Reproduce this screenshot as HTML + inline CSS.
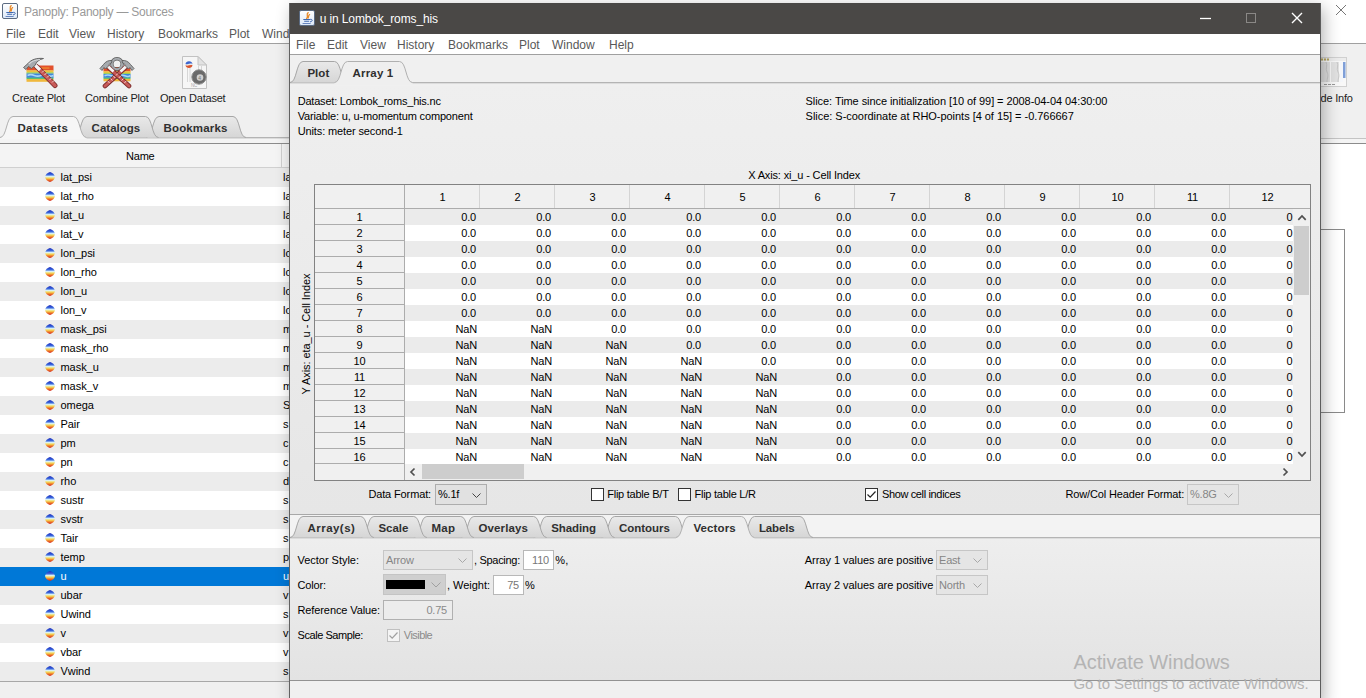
<!DOCTYPE html><html><head><meta charset="utf-8"><title>Panoply</title><style>
*{box-sizing:border-box;margin:0;padding:0}
html,body{width:1366px;height:698px;overflow:hidden;background:#fff}
body{position:relative;font-family:"Liberation Sans",sans-serif;font-size:11px;color:#000;letter-spacing:-0.2px}
.a{position:absolute;white-space:nowrap}
.t{position:absolute;white-space:nowrap;line-height:14px;height:14px}
.menu{position:absolute;white-space:nowrap;font-size:12px;color:#585858;letter-spacing:0;line-height:14px}
.tabt{position:absolute;white-space:nowrap;font-weight:bold;font-size:12px;color:#303030;letter-spacing:0.1px;line-height:14px}
.row{position:absolute;left:0;width:290px;height:19px}
.row span{position:absolute;top:2px;line-height:14px;letter-spacing:-0.05px}
.cell{position:absolute;text-align:right;line-height:14px;height:14px;width:60px}
.dis{color:#888}
</style></head><body>
<div class="a" style="left:0;top:0;width:1366px;height:43px;background:#fff"></div>
<div class="a" style="left:0;top:43px;width:1366px;height:1px;background:#a0a0a0"></div>
<div class="a" style="left:0;top:44px;width:1366px;height:99px;background:#f0f0f0"></div>
<svg class="a" style="left:2px;top:3px" width="16" height="16" viewBox="0 0 16 16"><defs><linearGradient id="jg" x1="0" y1="0" x2="0" y2="1"><stop offset="0" stop-color="#ffffff"/><stop offset="1" stop-color="#dce8f8"/></linearGradient></defs><rect x="0.500" y="0.500" width="15" height="15" rx="1.500" fill="url(#jg)" stroke="#5b6b82"/><path d="M9.200 2.600C6.500 4.500 10 6 7.600 8.600M10.600 4.600C9 5.800 10 6.600 9 8" stroke="#e88a2a" stroke-width="1.300" fill="none" stroke-linecap="round"/><path d="M4.300 9.500h7M5.200 11.300h5" stroke="#3f68b0" stroke-width="1.100" fill="none"/><path d="M3.600 13.500h8" stroke="#5a7ab8" stroke-width="0.900" fill="none"/><path d="M11.300 9.300c2.600-.3 2.600 2.200-.3 2.600" stroke="#3f68b0" stroke-width="1" fill="none"/></svg>
<div class="t" style="left:24px;top:5px;font-size:12px;letter-spacing:-0.254px;color:#999;line-height:15px;height:15px">Panoply: Panoply — Sources</div>
<svg class="a" style="left:1336px;top:5px" width="10" height="10" viewBox="0 0 10 10"><path d="M0 0L10 10M10 0L0 10" stroke="#777" stroke-width="1" fill="none"/></svg>
<div class="menu" style="left:6px;top:27px">File</div>
<div class="menu" style="left:38px;top:27px">Edit</div>
<div class="menu" style="left:69px;top:27px">View</div>
<div class="menu" style="left:107px;top:27px">History</div>
<div class="menu" style="left:158px;top:27px">Bookmarks</div>
<div class="menu" style="left:229px;top:27px">Plot</div>
<div class="menu" style="left:262px;top:27px">Window</div>
<svg class="a" style="left:22px;top:57px" width="36" height="32" viewBox="0 0 36 32"><rect x="4.5" y="8.5" width="27" height="5.1" fill="#e2512c"/><rect x="4.5" y="13.3" width="27" height="2.22" fill="#eec13c"/><rect x="4.5" y="15.22" width="27" height="1.58" fill="#9ed05c"/><rect x="4.5" y="16.5" width="27" height="4.46" fill="#3f86dc"/><rect x="4.5" y="20.66" width="27" height="1.74" fill="#58c070"/><rect x="4.5" y="22.1" width="27" height="2.7" fill="#f0b83c"/><path d="M5.5 18.42 q3.2399999999999998 -1.500 6.75 0 t6.75 0 t6.75 0 t5.4 0" stroke="#a8d8f4" stroke-width="1.600" fill="none"/><path d="M19.35 11.06 h8.1" stroke="#f08a30" stroke-width="1.400"/><g transform="translate(0,0)"><path d="M14.500 9.500L33 28.500" stroke="#7a2c2c" stroke-width="5" stroke-linecap="round"/><path d="M14.500 9.500L33 28.500" stroke="#c85a58" stroke-width="3.400" stroke-linecap="round"/><path d="M20 15.500l2-2M22.500 18l2-2M25 20.500l2-2M27.500 23l2-2M30 25.500l2-2" stroke="#f6dcdc" stroke-width="0.900"/><path d="M12 7L18 13" stroke="#f4f4f4" stroke-width="3.200"/><path d="M1.500 10.500L6 6.500C9 2.500 15 0.800 21.500 1.500C17 2.500 14 5 13 8.500L9.500 11.500L6.500 9.500L4 12.500Z" fill="#a6aaae" stroke="#5c5c5c" stroke-width="0.900" stroke-linejoin="round"/><path d="M7 7C10 4 14 2.800 18 2.500" stroke="#d8dadc" stroke-width="1.200" fill="none"/></g></svg>
<svg class="a" style="left:99px;top:57px" width="36" height="32" viewBox="0 0 36 32"><rect x="4.5" y="10" width="27" height="4.5" fill="#e2512c"/><rect x="4.5" y="14.2" width="27" height="1.98" fill="#eec13c"/><rect x="4.5" y="15.88" width="27" height="1.42" fill="#9ed05c"/><rect x="4.5" y="17.0" width="27" height="3.94" fill="#3f86dc"/><rect x="4.5" y="20.64" width="27" height="1.56" fill="#58c070"/><rect x="4.5" y="21.9" width="27" height="2.4" fill="#f0b83c"/><path d="M5.5 18.68 q3.2399999999999998 -1.500 6.75 0 t6.75 0 t6.75 0 t5.4 0" stroke="#a8d8f4" stroke-width="1.600" fill="none"/><path d="M19.35 12.24 h8.1" stroke="#f08a30" stroke-width="1.400"/><circle cx="18" cy="7" r="5.200" fill="none" stroke="#5c5c5c" stroke-width="3.400"/><circle cx="18" cy="7" r="5.200" fill="none" stroke="#a6aaae" stroke-width="2"/><g transform="translate(36,0) scale(-1,1)"><path d="M9 10L30 29" stroke="#7a2c2c" stroke-width="4.600" stroke-linecap="round"/><path d="M9 10L30 29" stroke="#c85a58" stroke-width="3" stroke-linecap="round"/><path d="M17 18.500l1.800-2M19.800 21l1.800-2M22.600 23.500l1.800-2M25.400 26l1.800-2" stroke="#f6dcdc" stroke-width="0.900"/><path d="M8 8.500L14.500 14.500" stroke="#f4f4f4" stroke-width="2.800"/><path d="M1 11.500L4.500 7.500C6.500 4.500 10 3 13 3.500L12.500 6C10.500 6.500 9.500 8 9 9.500L6.500 12L5 10.500L3 13.500Z" fill="#a6aaae" stroke="#5c5c5c" stroke-width="0.900" stroke-linejoin="round"/></g><g ><path d="M9 10L30 29" stroke="#7a2c2c" stroke-width="4.600" stroke-linecap="round"/><path d="M9 10L30 29" stroke="#c85a58" stroke-width="3" stroke-linecap="round"/><path d="M17 18.500l1.800-2M19.800 21l1.800-2M22.600 23.500l1.800-2M25.400 26l1.800-2" stroke="#f6dcdc" stroke-width="0.900"/><path d="M8 8.500L14.500 14.500" stroke="#f4f4f4" stroke-width="2.800"/><path d="M1 11.500L4.500 7.500C6.500 4.500 10 3 13 3.500L12.500 6C10.500 6.500 9.500 8 9 9.500L6.500 12L5 10.500L3 13.500Z" fill="#a6aaae" stroke="#5c5c5c" stroke-width="0.900" stroke-linejoin="round"/></g></svg>
<svg class="a" style="left:181px;top:55px" width="28" height="35" viewBox="0 0 28 35"><path d="M1.500 1.500h15.500l8.500 8.500v23.500h-24z" fill="#f6f6f6" stroke="#c2c2c2"/><path d="M17 1.500v8.500h8.500z" fill="#e2e2e2" stroke="#c2c2c2" stroke-linejoin="round"/><path d="M6.500 13v14M9 13v14M17.500 11v6M20.500 11v6" stroke="#d6d6d6" stroke-width="1"/><circle cx="8" cy="9.500" r="3.600" fill="#e8e8e8"/><path d="M4.500 9a3.600 3.600 0 0 1 7 0c-2-1.500-4 1-7 0z" fill="#3a66d0"/><path d="M4.500 10.300c2.500 1.200 4.500-1 7 0a3.600 3.600 0 0 1-7 0z" fill="#d8542c"/><circle cx="18" cy="22" r="7.200" fill="#6a6a6a"/><circle cx="18" cy="22" r="7.200" fill="none" stroke="#8e8e8e" stroke-width="1"/><circle cx="19" cy="22.500" r="3.300" fill="#d0d0d0"/><text x="17.200" y="24.500" font-size="5" font-family="Liberation Sans, sans-serif" fill="#777">4</text><text x="10" y="31.500" font-size="4.500" font-family="Liberation Sans, sans-serif" fill="#aaa">NC</text></svg>
<div class="t" style="left:12px;top:91px;color:#222">Create Plot</div>
<div class="t" style="left:85px;top:91px;color:#222">Combine Plot</div>
<div class="t" style="left:160px;top:91px;color:#222">Open Dataset</div>
<div class="t" style="right:13.25px;top:91px;color:#222">Hide Info</div>
<svg class="a" style="left:1320px;top:57px" width="28" height="31" viewBox="0 0 28 31"><rect x="-1" y="0.500" width="27.500" height="29" fill="#f8f8f8" stroke="#d0d0d0"/><rect x="0" y="1" width="26" height="3" fill="#ececec"/><rect x="1" y="1.500" width="2" height="2" fill="#b8a860"/><rect x="4" y="1.500" width="2" height="2" fill="#b8a860"/><rect x="7" y="1.500" width="2" height="2" fill="#b8a860"/><rect x="0" y="5" width="10" height="20" fill="#e0e0e0"/><rect x="11" y="5" width="8" height="20" fill="#e2e2e2"/><rect x="20" y="5" width="3" height="20" fill="#f4f6fa"/><rect x="23" y="5" width="2.500" height="16" fill="#7f9fd8"/><path d="M6 5c2 4-1 6 1 10s0 6 0 10M17 5c2 4-1 6 1 10s0 6 0 10" stroke="#c8c8c8" fill="none"/><path d="M4 27.500h12" stroke="#9a9a9a" stroke-width="1" stroke-dasharray="3 1"/></svg>
<svg class="a" style="left:0px;top:113px" width="290" height="31" viewBox="0 0 290 31"><defs><linearGradient id="tg" x1="0" y1="0" x2="0" y2="1"><stop offset="0" stop-color="#e9e9e9"/><stop offset="1" stop-color="#d6d6d6"/></linearGradient></defs><rect x="0" y="24.5" width="290" height="6.5" fill="#f4f4f4"/><path d="M0 24.5H290" stroke="#b4b4b4" fill="none"/><path d="M0 25.5H290" stroke="#dcdcdc" fill="none"/><path d="M146.0 24.5 C153.0 24.5 152.0 3.5 159.0 3.5 L233.0 3.5 C240.0 3.5 239.0 24.5 246.0 24.5" fill="url(#tg)" stroke="#a6a6a6"/><path d="M74.0 24.5 C81.0 24.5 80.0 3.5 87.0 3.5 L145.5 3.5 C152.5 3.5 151.5 24.5 158.5 24.5" fill="url(#tg)" stroke="#a6a6a6"/><path d="M0.0 24.5 C7.0 24.5 6.0 3.5 13.0 3.5 L73.5 3.5 C80.5 3.5 79.5 24.5 86.5 24.5 V26.0 H0.0Z" fill="#f6f6f6" stroke="none"/><path d="M0.0 24.5 C7.0 24.5 6.0 3.5 13.0 3.5 L73.5 3.5 C80.5 3.5 79.5 24.5 86.5 24.5" fill="none" stroke="#b0b0b0"/></svg>
<div class="tabt" style="left:17.4px;top:121px;font-size:11.5px;letter-spacing:0.356px">Datasets</div>
<div class="tabt" style="left:91.6px;top:121px;font-size:11.5px;letter-spacing:0.003px">Catalogs</div>
<div class="tabt" style="left:163.5px;top:121px;font-size:11.5px;letter-spacing:0.151px">Bookmarks</div>
<div class="a" style="left:0;top:143px;width:1366px;height:1px;background:#8c8c8c"></div>
<div class="a" style="left:0;top:144px;width:290px;height:23px;background:#f4f4f4"></div>
<div class="a" style="left:0;top:167px;width:290px;height:1px;background:#d0d0d0"></div>
<div class="a" style="left:281px;top:144px;width:1px;height:23px;background:#d0d0d0"></div>
<div class="t" style="left:126px;top:149px">Name</div>
<svg width="0" height="0" style="position:absolute"><defs><linearGradient id="rb" x1="0" y1="0" x2="0" y2="1"><stop offset="0" stop-color="#1c28b8"/><stop offset="0.280" stop-color="#3a6ae0"/><stop offset="0.450" stop-color="#d8f0f4"/><stop offset="0.600" stop-color="#f6e060"/><stop offset="0.780" stop-color="#f08028"/><stop offset="1" stop-color="#d02020"/></linearGradient></defs></svg>
<div class="row" style="top:168px;background:#ececec;color:#000"><svg class="a" style="left:45px;top:4px" width="10" height="10" viewBox="0 0 10 10"><path d="M5 0C7.500 0.500 9.500 2.500 10 5C9.500 7.500 7.500 9.500 5 10C2.500 9.500 0.500 7.500 0 5C0.500 2.500 2.500 0.500 5 0Z" fill="url(#rb)"/></svg><span style="left:60.5px">lat_psi</span><span style="left:283px">la</span></div>
<div class="row" style="top:187px;background:#fff;color:#000"><svg class="a" style="left:45px;top:4px" width="10" height="10" viewBox="0 0 10 10"><path d="M5 0C7.500 0.500 9.500 2.500 10 5C9.500 7.500 7.500 9.500 5 10C2.500 9.500 0.500 7.500 0 5C0.500 2.500 2.500 0.500 5 0Z" fill="url(#rb)"/></svg><span style="left:60.5px">lat_rho</span><span style="left:283px">la</span></div>
<div class="row" style="top:206px;background:#ececec;color:#000"><svg class="a" style="left:45px;top:4px" width="10" height="10" viewBox="0 0 10 10"><path d="M5 0C7.500 0.500 9.500 2.500 10 5C9.500 7.500 7.500 9.500 5 10C2.500 9.500 0.500 7.500 0 5C0.500 2.500 2.500 0.500 5 0Z" fill="url(#rb)"/></svg><span style="left:60.5px">lat_u</span><span style="left:283px">la</span></div>
<div class="row" style="top:225px;background:#fff;color:#000"><svg class="a" style="left:45px;top:4px" width="10" height="10" viewBox="0 0 10 10"><path d="M5 0C7.500 0.500 9.500 2.500 10 5C9.500 7.500 7.500 9.500 5 10C2.500 9.500 0.500 7.500 0 5C0.500 2.500 2.500 0.500 5 0Z" fill="url(#rb)"/></svg><span style="left:60.5px">lat_v</span><span style="left:283px">la</span></div>
<div class="row" style="top:244px;background:#ececec;color:#000"><svg class="a" style="left:45px;top:4px" width="10" height="10" viewBox="0 0 10 10"><path d="M5 0C7.500 0.500 9.500 2.500 10 5C9.500 7.500 7.500 9.500 5 10C2.500 9.500 0.500 7.500 0 5C0.500 2.500 2.500 0.500 5 0Z" fill="url(#rb)"/></svg><span style="left:60.5px">lon_psi</span><span style="left:283px">lo</span></div>
<div class="row" style="top:263px;background:#fff;color:#000"><svg class="a" style="left:45px;top:4px" width="10" height="10" viewBox="0 0 10 10"><path d="M5 0C7.500 0.500 9.500 2.500 10 5C9.500 7.500 7.500 9.500 5 10C2.500 9.500 0.500 7.500 0 5C0.500 2.500 2.500 0.500 5 0Z" fill="url(#rb)"/></svg><span style="left:60.5px">lon_rho</span><span style="left:283px">lo</span></div>
<div class="row" style="top:282px;background:#ececec;color:#000"><svg class="a" style="left:45px;top:4px" width="10" height="10" viewBox="0 0 10 10"><path d="M5 0C7.500 0.500 9.500 2.500 10 5C9.500 7.500 7.500 9.500 5 10C2.500 9.500 0.500 7.500 0 5C0.500 2.500 2.500 0.500 5 0Z" fill="url(#rb)"/></svg><span style="left:60.5px">lon_u</span><span style="left:283px">lo</span></div>
<div class="row" style="top:301px;background:#fff;color:#000"><svg class="a" style="left:45px;top:4px" width="10" height="10" viewBox="0 0 10 10"><path d="M5 0C7.500 0.500 9.500 2.500 10 5C9.500 7.500 7.500 9.500 5 10C2.500 9.500 0.500 7.500 0 5C0.500 2.500 2.500 0.500 5 0Z" fill="url(#rb)"/></svg><span style="left:60.5px">lon_v</span><span style="left:283px">lo</span></div>
<div class="row" style="top:320px;background:#ececec;color:#000"><svg class="a" style="left:45px;top:4px" width="10" height="10" viewBox="0 0 10 10"><path d="M5 0C7.500 0.500 9.500 2.500 10 5C9.500 7.500 7.500 9.500 5 10C2.500 9.500 0.500 7.500 0 5C0.500 2.500 2.500 0.500 5 0Z" fill="url(#rb)"/></svg><span style="left:60.5px">mask_psi</span><span style="left:283px">m</span></div>
<div class="row" style="top:339px;background:#fff;color:#000"><svg class="a" style="left:45px;top:4px" width="10" height="10" viewBox="0 0 10 10"><path d="M5 0C7.500 0.500 9.500 2.500 10 5C9.500 7.500 7.500 9.500 5 10C2.500 9.500 0.500 7.500 0 5C0.500 2.500 2.500 0.500 5 0Z" fill="url(#rb)"/></svg><span style="left:60.5px">mask_rho</span><span style="left:283px">m</span></div>
<div class="row" style="top:358px;background:#ececec;color:#000"><svg class="a" style="left:45px;top:4px" width="10" height="10" viewBox="0 0 10 10"><path d="M5 0C7.500 0.500 9.500 2.500 10 5C9.500 7.500 7.500 9.500 5 10C2.500 9.500 0.500 7.500 0 5C0.500 2.500 2.500 0.500 5 0Z" fill="url(#rb)"/></svg><span style="left:60.5px">mask_u</span><span style="left:283px">m</span></div>
<div class="row" style="top:377px;background:#fff;color:#000"><svg class="a" style="left:45px;top:4px" width="10" height="10" viewBox="0 0 10 10"><path d="M5 0C7.500 0.500 9.500 2.500 10 5C9.500 7.500 7.500 9.500 5 10C2.500 9.500 0.500 7.500 0 5C0.500 2.500 2.500 0.500 5 0Z" fill="url(#rb)"/></svg><span style="left:60.5px">mask_v</span><span style="left:283px">m</span></div>
<div class="row" style="top:396px;background:#ececec;color:#000"><svg class="a" style="left:45px;top:4px" width="10" height="10" viewBox="0 0 10 10"><path d="M5 0C7.500 0.500 9.500 2.500 10 5C9.500 7.500 7.500 9.500 5 10C2.500 9.500 0.500 7.500 0 5C0.500 2.500 2.500 0.500 5 0Z" fill="url(#rb)"/></svg><span style="left:60.5px">omega</span><span style="left:283px">S</span></div>
<div class="row" style="top:415px;background:#fff;color:#000"><svg class="a" style="left:45px;top:4px" width="10" height="10" viewBox="0 0 10 10"><path d="M5 0C7.500 0.500 9.500 2.500 10 5C9.500 7.500 7.500 9.500 5 10C2.500 9.500 0.500 7.500 0 5C0.500 2.500 2.500 0.500 5 0Z" fill="url(#rb)"/></svg><span style="left:60.5px">Pair</span><span style="left:283px">s</span></div>
<div class="row" style="top:434px;background:#ececec;color:#000"><svg class="a" style="left:45px;top:4px" width="10" height="10" viewBox="0 0 10 10"><path d="M5 0C7.500 0.500 9.500 2.500 10 5C9.500 7.500 7.500 9.500 5 10C2.500 9.500 0.500 7.500 0 5C0.500 2.500 2.500 0.500 5 0Z" fill="url(#rb)"/></svg><span style="left:60.5px">pm</span><span style="left:283px">c</span></div>
<div class="row" style="top:453px;background:#fff;color:#000"><svg class="a" style="left:45px;top:4px" width="10" height="10" viewBox="0 0 10 10"><path d="M5 0C7.500 0.500 9.500 2.500 10 5C9.500 7.500 7.500 9.500 5 10C2.500 9.500 0.500 7.500 0 5C0.500 2.500 2.500 0.500 5 0Z" fill="url(#rb)"/></svg><span style="left:60.5px">pn</span><span style="left:283px">c</span></div>
<div class="row" style="top:472px;background:#ececec;color:#000"><svg class="a" style="left:45px;top:4px" width="10" height="10" viewBox="0 0 10 10"><path d="M5 0C7.500 0.500 9.500 2.500 10 5C9.500 7.500 7.500 9.500 5 10C2.500 9.500 0.500 7.500 0 5C0.500 2.500 2.500 0.500 5 0Z" fill="url(#rb)"/></svg><span style="left:60.5px">rho</span><span style="left:283px">d</span></div>
<div class="row" style="top:491px;background:#fff;color:#000"><svg class="a" style="left:45px;top:4px" width="10" height="10" viewBox="0 0 10 10"><path d="M5 0C7.500 0.500 9.500 2.500 10 5C9.500 7.500 7.500 9.500 5 10C2.500 9.500 0.500 7.500 0 5C0.500 2.500 2.500 0.500 5 0Z" fill="url(#rb)"/></svg><span style="left:60.5px">sustr</span><span style="left:283px">s</span></div>
<div class="row" style="top:510px;background:#ececec;color:#000"><svg class="a" style="left:45px;top:4px" width="10" height="10" viewBox="0 0 10 10"><path d="M5 0C7.500 0.500 9.500 2.500 10 5C9.500 7.500 7.500 9.500 5 10C2.500 9.500 0.500 7.500 0 5C0.500 2.500 2.500 0.500 5 0Z" fill="url(#rb)"/></svg><span style="left:60.5px">svstr</span><span style="left:283px">s</span></div>
<div class="row" style="top:529px;background:#fff;color:#000"><svg class="a" style="left:45px;top:4px" width="10" height="10" viewBox="0 0 10 10"><path d="M5 0C7.500 0.500 9.500 2.500 10 5C9.500 7.500 7.500 9.500 5 10C2.500 9.500 0.500 7.500 0 5C0.500 2.500 2.500 0.500 5 0Z" fill="url(#rb)"/></svg><span style="left:60.5px">Tair</span><span style="left:283px">s</span></div>
<div class="row" style="top:548px;background:#ececec;color:#000"><svg class="a" style="left:45px;top:4px" width="10" height="10" viewBox="0 0 10 10"><path d="M5 0C7.500 0.500 9.500 2.500 10 5C9.500 7.500 7.500 9.500 5 10C2.500 9.500 0.500 7.500 0 5C0.500 2.500 2.500 0.500 5 0Z" fill="url(#rb)"/></svg><span style="left:60.5px">temp</span><span style="left:283px">p</span></div>
<div class="row" style="top:567px;background:#0078d7;color:#fff"><svg class="a" style="left:45px;top:4px" width="10" height="10" viewBox="0 0 10 10"><path d="M5 0C7.500 0.500 9.500 2.500 10 5C9.500 7.500 7.500 9.500 5 10C2.500 9.500 0.500 7.500 0 5C0.500 2.500 2.500 0.500 5 0Z" fill="url(#rb)"/></svg><span style="left:60.5px">u</span><span style="left:283px">u</span></div>
<div class="row" style="top:586px;background:#ececec;color:#000"><svg class="a" style="left:45px;top:4px" width="10" height="10" viewBox="0 0 10 10"><path d="M5 0C7.500 0.500 9.500 2.500 10 5C9.500 7.500 7.500 9.500 5 10C2.500 9.500 0.500 7.500 0 5C0.500 2.500 2.500 0.500 5 0Z" fill="url(#rb)"/></svg><span style="left:60.5px">ubar</span><span style="left:283px">v</span></div>
<div class="row" style="top:605px;background:#fff;color:#000"><svg class="a" style="left:45px;top:4px" width="10" height="10" viewBox="0 0 10 10"><path d="M5 0C7.500 0.500 9.500 2.500 10 5C9.500 7.500 7.500 9.500 5 10C2.500 9.500 0.500 7.500 0 5C0.500 2.500 2.500 0.500 5 0Z" fill="url(#rb)"/></svg><span style="left:60.5px">Uwind</span><span style="left:283px">s</span></div>
<div class="row" style="top:624px;background:#ececec;color:#000"><svg class="a" style="left:45px;top:4px" width="10" height="10" viewBox="0 0 10 10"><path d="M5 0C7.500 0.500 9.500 2.500 10 5C9.500 7.500 7.500 9.500 5 10C2.500 9.500 0.500 7.500 0 5C0.500 2.500 2.500 0.500 5 0Z" fill="url(#rb)"/></svg><span style="left:60.5px">v</span><span style="left:283px">v</span></div>
<div class="row" style="top:643px;background:#fff;color:#000"><svg class="a" style="left:45px;top:4px" width="10" height="10" viewBox="0 0 10 10"><path d="M5 0C7.500 0.500 9.500 2.500 10 5C9.500 7.500 7.500 9.500 5 10C2.500 9.500 0.500 7.500 0 5C0.500 2.500 2.500 0.500 5 0Z" fill="url(#rb)"/></svg><span style="left:60.5px">vbar</span><span style="left:283px">v</span></div>
<div class="row" style="top:662px;background:#ececec;color:#000"><svg class="a" style="left:45px;top:4px" width="10" height="10" viewBox="0 0 10 10"><path d="M5 0C7.500 0.500 9.500 2.500 10 5C9.500 7.500 7.500 9.500 5 10C2.500 9.500 0.500 7.500 0 5C0.500 2.500 2.500 0.500 5 0Z" fill="url(#rb)"/></svg><span style="left:60.5px">Vwind</span><span style="left:283px">s</span></div>
<div class="a" style="left:0;top:681px;width:290px;height:1px;background:#a8a8a8"></div>
<div class="a" style="left:0;top:682px;width:290px;height:16px;background:#f0f0f0"></div>
<div class="a" style="left:1320px;top:138px;width:46px;height:1px;background:#c4c4c4"></div>
<div class="a" style="left:1320px;top:139px;width:46px;height:4px;background:#f4f4f4"></div>
<div class="a" style="left:1320px;top:144px;width:46px;height:554px;background:#fff"></div>
<div class="a" style="left:1320px;top:229px;width:25px;height:184px;border:1px solid #8a8a8a;border-left:none;background:#fff"></div>
<div class="a" style="left:290px;top:3px;width:1030px;height:700px;background:#ececec;box-shadow:3px 5px 16px 0 rgba(0,0,0,.32)">
<div class="a" style="left:-1px;top:0;width:1px;height:700px;background:#626262"></div><div class="a" style="left:1030px;top:0;width:1px;height:700px;background:#5c5c5c"></div>
<div class="a" style="left:0;top:0;width:1030px;height:31px;background:#4a4846"></div>
<div class="a" style="left:0;top:80px;width:1030px;height:431px;background:linear-gradient(#efefef,#e6e6e6)"></div>
<div class="a" style="left:0;top:535px;width:1030px;height:142px;background:linear-gradient(#eeeeee,#e3e3e3)"></div>
<svg class="a" style="left:9px;top:7px" width="16" height="16" viewBox="0 0 16 16"><defs><linearGradient id="jg2" x1="0" y1="0" x2="0" y2="1"><stop offset="0" stop-color="#ffffff"/><stop offset="1" stop-color="#dce8f8"/></linearGradient></defs><rect x="0.500" y="0.500" width="15" height="15" rx="1.500" fill="url(#jg2)" stroke="#5b6b82"/><path d="M9.200 2.600C6.500 4.500 10 6 7.600 8.600M10.600 4.600C9 5.800 10 6.600 9 8" stroke="#e88a2a" stroke-width="1.300" fill="none" stroke-linecap="round"/><path d="M4.300 9.500h7M5.200 11.300h5" stroke="#3f68b0" stroke-width="1.100" fill="none"/><path d="M3.600 13.500h8" stroke="#5a7ab8" stroke-width="0.900" fill="none"/><path d="M11.300 9.300c2.600-.3 2.600 2.200-.3 2.600" stroke="#3f68b0" stroke-width="1" fill="none"/></svg>
<div class="t" style="left:29.8px;top:9px;font-size:12px;letter-spacing:-0.132px;color:#fff;line-height:15px;height:15px">u in Lombok_roms_his</div>
<svg class="a" style="left:910px;top:9px" width="110" height="14" viewBox="0 0 110 14"><path d="M0 6.500h11" stroke="#fff" stroke-width="1.300"/><rect x="46.500" y="1.500" width="9" height="9" fill="none" stroke="#8a8886"/><path d="M92 1L102 11M102 1L92 11" stroke="#fff" stroke-width="1.400"/></svg>
<div class="a" style="left:0;top:31px;width:1030px;height:20px;background:#fff"></div>
<div class="a" style="left:0;top:51px;width:1030px;height:1px;background:#a0a0a0"></div>
<div class="menu" style="left:6px;top:35px">File</div>
<div class="menu" style="left:37px;top:35px">Edit</div>
<div class="menu" style="left:70px;top:35px">View</div>
<div class="menu" style="left:107px;top:35px">History</div>
<div class="menu" style="left:158px;top:35px">Bookmarks</div>
<div class="menu" style="left:229px;top:35px">Plot</div>
<div class="menu" style="left:262px;top:35px">Window</div>
<div class="menu" style="left:319px;top:35px">Help</div>
<div class="a" style="left:0;top:52px;width:1030px;height:31px;background:#f0f0f0"></div>
<svg class="a" style="left:0px;top:55px" width="1030" height="27" viewBox="0 0 1030 27"><defs><linearGradient id="tg2" x1="0" y1="0" x2="0" y2="1"><stop offset="0" stop-color="#e9e9e9"/><stop offset="1" stop-color="#d6d6d6"/></linearGradient></defs><rect x="0" y="24.5" width="1030" height="2.5" fill="#efefef"/><path d="M0 24.5H1030" stroke="#b4b4b4" fill="none"/><path d="M0 25.5H1030" stroke="#dcdcdc" fill="none"/><path d="M0.0 24.5 C7.0 24.5 6.0 3.5 13.0 3.5 L44.5 3.5 C51.5 3.5 50.5 24.5 57.5 24.5" fill="url(#tg2)" stroke="#a6a6a6"/><path d="M44.5 24.5 C51.5 24.5 50.5 3.5 57.5 3.5 L109.5 3.5 C116.5 3.5 115.5 24.5 122.5 24.5 V26.0 H44.5Z" fill="#efefef" stroke="none"/><path d="M44.5 24.5 C51.5 24.5 50.5 3.5 57.5 3.5 L109.5 3.5 C116.5 3.5 115.5 24.5 122.5 24.5" fill="none" stroke="#b0b0b0"/></svg>
<div class="tabt" style="left:17.399999999999977px;top:63px;font-size:11.5px;letter-spacing:0.041px">Plot</div>
<div class="tabt" style="left:62.60000000000002px;top:63px;font-size:11.5px;letter-spacing:0.166px">Array 1</div>
<div class="t" style="left:7.7px;top:91px;font-size:11px;letter-spacing:-0.207px">Dataset: Lombok_roms_his.nc</div>
<div class="t" style="left:7.7px;top:106px;font-size:11px;letter-spacing:-0.16px">Variable: u, u-momentum component</div>
<div class="t" style="left:7.7px;top:121px;font-size:11px;letter-spacing:-0.124px">Units: meter second-1</div>
<div class="t" style="left:515.6px;top:91px;font-size:11px;letter-spacing:-0.066px">Slice: Time since initialization [10 of 99] = 2008-04-04 04:30:00</div>
<div class="t" style="left:515.6px;top:106px;font-size:11px;letter-spacing:-0.032px">Slice: S-coordinate at RHO-points [4 of 15] = -0.766667</div>
<div class="t" style="left:458.2px;top:165px;font-size:11px;letter-spacing:-0.147px">X Axis: xi_u - Cell Index</div>
<div class="t" style="left:15.5px;top:323.5px;letter-spacing:-0.073px;transform:translate(-50%,0) rotate(-90deg);transform-origin:center center">Y Axis: eta_u - Cell Index</div>
<div class="a" style="left:24px;top:181px;width:997px;height:297px;border:1px solid #828282;background:#fff;overflow:hidden">
<div class="a" style="left:0;top:0;width:995px;height:23px;background:#f0f0f0"></div>
<div class="a" style="left:0;top:23px;width:995px;height:1px;background:#acacac"></div>
<div class="a" style="left:0;top:24px;width:89px;height:271px;background:#f0f0f0"></div>
<div class="a" style="left:89px;top:0;width:1px;height:295px;background:#acacac"></div>
<div class="t" style="left:90px;top:5px;width:75px;text-align:center">1</div>
<div class="a" style="left:164px;top:0;width:1px;height:23px;background:#d4d4d4"></div>
<div class="t" style="left:165px;top:5px;width:75px;text-align:center">2</div>
<div class="a" style="left:239px;top:0;width:1px;height:23px;background:#d4d4d4"></div>
<div class="t" style="left:240px;top:5px;width:75px;text-align:center">3</div>
<div class="a" style="left:314px;top:0;width:1px;height:23px;background:#d4d4d4"></div>
<div class="t" style="left:315px;top:5px;width:75px;text-align:center">4</div>
<div class="a" style="left:389px;top:0;width:1px;height:23px;background:#d4d4d4"></div>
<div class="t" style="left:390px;top:5px;width:75px;text-align:center">5</div>
<div class="a" style="left:464px;top:0;width:1px;height:23px;background:#d4d4d4"></div>
<div class="t" style="left:465px;top:5px;width:75px;text-align:center">6</div>
<div class="a" style="left:539px;top:0;width:1px;height:23px;background:#d4d4d4"></div>
<div class="t" style="left:540px;top:5px;width:75px;text-align:center">7</div>
<div class="a" style="left:614px;top:0;width:1px;height:23px;background:#d4d4d4"></div>
<div class="t" style="left:615px;top:5px;width:75px;text-align:center">8</div>
<div class="a" style="left:689px;top:0;width:1px;height:23px;background:#d4d4d4"></div>
<div class="t" style="left:690px;top:5px;width:75px;text-align:center">9</div>
<div class="a" style="left:764px;top:0;width:1px;height:23px;background:#d4d4d4"></div>
<div class="t" style="left:765px;top:5px;width:75px;text-align:center">10</div>
<div class="a" style="left:839px;top:0;width:1px;height:23px;background:#d4d4d4"></div>
<div class="t" style="left:840px;top:5px;width:75px;text-align:center">11</div>
<div class="a" style="left:914px;top:0;width:1px;height:23px;background:#d4d4d4"></div>
<div class="t" style="left:915px;top:5px;width:75px;text-align:center">12</div>
<div class="a" style="left:90px;top:24px;width:888px;height:16px;background:#ebebeb"></div>
<div class="a" style="left:0;top:39px;width:89px;height:1px;background:#acacac"></div>
<div class="t" style="left:0;top:25px;width:89px;text-align:center">1</div>
<div class="cell" style="left:101px;top:25px">0.0</div>
<div class="cell" style="left:176px;top:25px">0.0</div>
<div class="cell" style="left:251px;top:25px">0.0</div>
<div class="cell" style="left:326px;top:25px">0.0</div>
<div class="cell" style="left:401px;top:25px">0.0</div>
<div class="cell" style="left:476px;top:25px">0.0</div>
<div class="cell" style="left:551px;top:25px">0.0</div>
<div class="cell" style="left:626px;top:25px">0.0</div>
<div class="cell" style="left:701px;top:25px">0.0</div>
<div class="cell" style="left:776px;top:25px">0.0</div>
<div class="cell" style="left:851px;top:25px">0.0</div>
<div class="cell" style="left:918px;top:25px;width:60px;overflow:hidden"><span style="position:absolute;left:53.5px">0.0</span></div>
<div class="a" style="left:90px;top:40px;width:888px;height:16px;background:#fff"></div>
<div class="a" style="left:0;top:55px;width:89px;height:1px;background:#acacac"></div>
<div class="t" style="left:0;top:41px;width:89px;text-align:center">2</div>
<div class="cell" style="left:101px;top:41px">0.0</div>
<div class="cell" style="left:176px;top:41px">0.0</div>
<div class="cell" style="left:251px;top:41px">0.0</div>
<div class="cell" style="left:326px;top:41px">0.0</div>
<div class="cell" style="left:401px;top:41px">0.0</div>
<div class="cell" style="left:476px;top:41px">0.0</div>
<div class="cell" style="left:551px;top:41px">0.0</div>
<div class="cell" style="left:626px;top:41px">0.0</div>
<div class="cell" style="left:701px;top:41px">0.0</div>
<div class="cell" style="left:776px;top:41px">0.0</div>
<div class="cell" style="left:851px;top:41px">0.0</div>
<div class="cell" style="left:918px;top:41px;width:60px;overflow:hidden"><span style="position:absolute;left:53.5px">0.0</span></div>
<div class="a" style="left:90px;top:56px;width:888px;height:16px;background:#ebebeb"></div>
<div class="a" style="left:0;top:71px;width:89px;height:1px;background:#acacac"></div>
<div class="t" style="left:0;top:57px;width:89px;text-align:center">3</div>
<div class="cell" style="left:101px;top:57px">0.0</div>
<div class="cell" style="left:176px;top:57px">0.0</div>
<div class="cell" style="left:251px;top:57px">0.0</div>
<div class="cell" style="left:326px;top:57px">0.0</div>
<div class="cell" style="left:401px;top:57px">0.0</div>
<div class="cell" style="left:476px;top:57px">0.0</div>
<div class="cell" style="left:551px;top:57px">0.0</div>
<div class="cell" style="left:626px;top:57px">0.0</div>
<div class="cell" style="left:701px;top:57px">0.0</div>
<div class="cell" style="left:776px;top:57px">0.0</div>
<div class="cell" style="left:851px;top:57px">0.0</div>
<div class="cell" style="left:918px;top:57px;width:60px;overflow:hidden"><span style="position:absolute;left:53.5px">0.0</span></div>
<div class="a" style="left:90px;top:72px;width:888px;height:16px;background:#fff"></div>
<div class="a" style="left:0;top:87px;width:89px;height:1px;background:#acacac"></div>
<div class="t" style="left:0;top:73px;width:89px;text-align:center">4</div>
<div class="cell" style="left:101px;top:73px">0.0</div>
<div class="cell" style="left:176px;top:73px">0.0</div>
<div class="cell" style="left:251px;top:73px">0.0</div>
<div class="cell" style="left:326px;top:73px">0.0</div>
<div class="cell" style="left:401px;top:73px">0.0</div>
<div class="cell" style="left:476px;top:73px">0.0</div>
<div class="cell" style="left:551px;top:73px">0.0</div>
<div class="cell" style="left:626px;top:73px">0.0</div>
<div class="cell" style="left:701px;top:73px">0.0</div>
<div class="cell" style="left:776px;top:73px">0.0</div>
<div class="cell" style="left:851px;top:73px">0.0</div>
<div class="cell" style="left:918px;top:73px;width:60px;overflow:hidden"><span style="position:absolute;left:53.5px">0.0</span></div>
<div class="a" style="left:90px;top:88px;width:888px;height:16px;background:#ebebeb"></div>
<div class="a" style="left:0;top:103px;width:89px;height:1px;background:#acacac"></div>
<div class="t" style="left:0;top:89px;width:89px;text-align:center">5</div>
<div class="cell" style="left:101px;top:89px">0.0</div>
<div class="cell" style="left:176px;top:89px">0.0</div>
<div class="cell" style="left:251px;top:89px">0.0</div>
<div class="cell" style="left:326px;top:89px">0.0</div>
<div class="cell" style="left:401px;top:89px">0.0</div>
<div class="cell" style="left:476px;top:89px">0.0</div>
<div class="cell" style="left:551px;top:89px">0.0</div>
<div class="cell" style="left:626px;top:89px">0.0</div>
<div class="cell" style="left:701px;top:89px">0.0</div>
<div class="cell" style="left:776px;top:89px">0.0</div>
<div class="cell" style="left:851px;top:89px">0.0</div>
<div class="cell" style="left:918px;top:89px;width:60px;overflow:hidden"><span style="position:absolute;left:53.5px">0.0</span></div>
<div class="a" style="left:90px;top:104px;width:888px;height:16px;background:#fff"></div>
<div class="a" style="left:0;top:119px;width:89px;height:1px;background:#acacac"></div>
<div class="t" style="left:0;top:105px;width:89px;text-align:center">6</div>
<div class="cell" style="left:101px;top:105px">0.0</div>
<div class="cell" style="left:176px;top:105px">0.0</div>
<div class="cell" style="left:251px;top:105px">0.0</div>
<div class="cell" style="left:326px;top:105px">0.0</div>
<div class="cell" style="left:401px;top:105px">0.0</div>
<div class="cell" style="left:476px;top:105px">0.0</div>
<div class="cell" style="left:551px;top:105px">0.0</div>
<div class="cell" style="left:626px;top:105px">0.0</div>
<div class="cell" style="left:701px;top:105px">0.0</div>
<div class="cell" style="left:776px;top:105px">0.0</div>
<div class="cell" style="left:851px;top:105px">0.0</div>
<div class="cell" style="left:918px;top:105px;width:60px;overflow:hidden"><span style="position:absolute;left:53.5px">0.0</span></div>
<div class="a" style="left:90px;top:120px;width:888px;height:16px;background:#ebebeb"></div>
<div class="a" style="left:0;top:135px;width:89px;height:1px;background:#acacac"></div>
<div class="t" style="left:0;top:121px;width:89px;text-align:center">7</div>
<div class="cell" style="left:101px;top:121px">0.0</div>
<div class="cell" style="left:176px;top:121px">0.0</div>
<div class="cell" style="left:251px;top:121px">0.0</div>
<div class="cell" style="left:326px;top:121px">0.0</div>
<div class="cell" style="left:401px;top:121px">0.0</div>
<div class="cell" style="left:476px;top:121px">0.0</div>
<div class="cell" style="left:551px;top:121px">0.0</div>
<div class="cell" style="left:626px;top:121px">0.0</div>
<div class="cell" style="left:701px;top:121px">0.0</div>
<div class="cell" style="left:776px;top:121px">0.0</div>
<div class="cell" style="left:851px;top:121px">0.0</div>
<div class="cell" style="left:918px;top:121px;width:60px;overflow:hidden"><span style="position:absolute;left:53.5px">0.0</span></div>
<div class="a" style="left:90px;top:136px;width:888px;height:16px;background:#fff"></div>
<div class="a" style="left:0;top:151px;width:89px;height:1px;background:#acacac"></div>
<div class="t" style="left:0;top:137px;width:89px;text-align:center">8</div>
<div class="cell" style="left:102px;top:137px">NaN</div>
<div class="cell" style="left:177px;top:137px">NaN</div>
<div class="cell" style="left:251px;top:137px">0.0</div>
<div class="cell" style="left:326px;top:137px">0.0</div>
<div class="cell" style="left:401px;top:137px">0.0</div>
<div class="cell" style="left:476px;top:137px">0.0</div>
<div class="cell" style="left:551px;top:137px">0.0</div>
<div class="cell" style="left:626px;top:137px">0.0</div>
<div class="cell" style="left:701px;top:137px">0.0</div>
<div class="cell" style="left:776px;top:137px">0.0</div>
<div class="cell" style="left:851px;top:137px">0.0</div>
<div class="cell" style="left:918px;top:137px;width:60px;overflow:hidden"><span style="position:absolute;left:53.5px">0.0</span></div>
<div class="a" style="left:90px;top:152px;width:888px;height:16px;background:#ebebeb"></div>
<div class="a" style="left:0;top:167px;width:89px;height:1px;background:#acacac"></div>
<div class="t" style="left:0;top:153px;width:89px;text-align:center">9</div>
<div class="cell" style="left:102px;top:153px">NaN</div>
<div class="cell" style="left:177px;top:153px">NaN</div>
<div class="cell" style="left:252px;top:153px">NaN</div>
<div class="cell" style="left:326px;top:153px">0.0</div>
<div class="cell" style="left:401px;top:153px">0.0</div>
<div class="cell" style="left:476px;top:153px">0.0</div>
<div class="cell" style="left:551px;top:153px">0.0</div>
<div class="cell" style="left:626px;top:153px">0.0</div>
<div class="cell" style="left:701px;top:153px">0.0</div>
<div class="cell" style="left:776px;top:153px">0.0</div>
<div class="cell" style="left:851px;top:153px">0.0</div>
<div class="cell" style="left:918px;top:153px;width:60px;overflow:hidden"><span style="position:absolute;left:53.5px">0.0</span></div>
<div class="a" style="left:90px;top:168px;width:888px;height:16px;background:#fff"></div>
<div class="a" style="left:0;top:183px;width:89px;height:1px;background:#acacac"></div>
<div class="t" style="left:0;top:169px;width:89px;text-align:center">10</div>
<div class="cell" style="left:102px;top:169px">NaN</div>
<div class="cell" style="left:177px;top:169px">NaN</div>
<div class="cell" style="left:252px;top:169px">NaN</div>
<div class="cell" style="left:327px;top:169px">NaN</div>
<div class="cell" style="left:401px;top:169px">0.0</div>
<div class="cell" style="left:476px;top:169px">0.0</div>
<div class="cell" style="left:551px;top:169px">0.0</div>
<div class="cell" style="left:626px;top:169px">0.0</div>
<div class="cell" style="left:701px;top:169px">0.0</div>
<div class="cell" style="left:776px;top:169px">0.0</div>
<div class="cell" style="left:851px;top:169px">0.0</div>
<div class="cell" style="left:918px;top:169px;width:60px;overflow:hidden"><span style="position:absolute;left:53.5px">0.0</span></div>
<div class="a" style="left:90px;top:184px;width:888px;height:16px;background:#ebebeb"></div>
<div class="a" style="left:0;top:199px;width:89px;height:1px;background:#acacac"></div>
<div class="t" style="left:0;top:185px;width:89px;text-align:center">11</div>
<div class="cell" style="left:102px;top:185px">NaN</div>
<div class="cell" style="left:177px;top:185px">NaN</div>
<div class="cell" style="left:252px;top:185px">NaN</div>
<div class="cell" style="left:327px;top:185px">NaN</div>
<div class="cell" style="left:402px;top:185px">NaN</div>
<div class="cell" style="left:476px;top:185px">0.0</div>
<div class="cell" style="left:551px;top:185px">0.0</div>
<div class="cell" style="left:626px;top:185px">0.0</div>
<div class="cell" style="left:701px;top:185px">0.0</div>
<div class="cell" style="left:776px;top:185px">0.0</div>
<div class="cell" style="left:851px;top:185px">0.0</div>
<div class="cell" style="left:918px;top:185px;width:60px;overflow:hidden"><span style="position:absolute;left:53.5px">0.0</span></div>
<div class="a" style="left:90px;top:200px;width:888px;height:16px;background:#fff"></div>
<div class="a" style="left:0;top:215px;width:89px;height:1px;background:#acacac"></div>
<div class="t" style="left:0;top:201px;width:89px;text-align:center">12</div>
<div class="cell" style="left:102px;top:201px">NaN</div>
<div class="cell" style="left:177px;top:201px">NaN</div>
<div class="cell" style="left:252px;top:201px">NaN</div>
<div class="cell" style="left:327px;top:201px">NaN</div>
<div class="cell" style="left:402px;top:201px">NaN</div>
<div class="cell" style="left:476px;top:201px">0.0</div>
<div class="cell" style="left:551px;top:201px">0.0</div>
<div class="cell" style="left:626px;top:201px">0.0</div>
<div class="cell" style="left:701px;top:201px">0.0</div>
<div class="cell" style="left:776px;top:201px">0.0</div>
<div class="cell" style="left:851px;top:201px">0.0</div>
<div class="cell" style="left:918px;top:201px;width:60px;overflow:hidden"><span style="position:absolute;left:53.5px">0.0</span></div>
<div class="a" style="left:90px;top:216px;width:888px;height:16px;background:#ebebeb"></div>
<div class="a" style="left:0;top:231px;width:89px;height:1px;background:#acacac"></div>
<div class="t" style="left:0;top:217px;width:89px;text-align:center">13</div>
<div class="cell" style="left:102px;top:217px">NaN</div>
<div class="cell" style="left:177px;top:217px">NaN</div>
<div class="cell" style="left:252px;top:217px">NaN</div>
<div class="cell" style="left:327px;top:217px">NaN</div>
<div class="cell" style="left:402px;top:217px">NaN</div>
<div class="cell" style="left:476px;top:217px">0.0</div>
<div class="cell" style="left:551px;top:217px">0.0</div>
<div class="cell" style="left:626px;top:217px">0.0</div>
<div class="cell" style="left:701px;top:217px">0.0</div>
<div class="cell" style="left:776px;top:217px">0.0</div>
<div class="cell" style="left:851px;top:217px">0.0</div>
<div class="cell" style="left:918px;top:217px;width:60px;overflow:hidden"><span style="position:absolute;left:53.5px">0.0</span></div>
<div class="a" style="left:90px;top:232px;width:888px;height:16px;background:#fff"></div>
<div class="a" style="left:0;top:247px;width:89px;height:1px;background:#acacac"></div>
<div class="t" style="left:0;top:233px;width:89px;text-align:center">14</div>
<div class="cell" style="left:102px;top:233px">NaN</div>
<div class="cell" style="left:177px;top:233px">NaN</div>
<div class="cell" style="left:252px;top:233px">NaN</div>
<div class="cell" style="left:327px;top:233px">NaN</div>
<div class="cell" style="left:402px;top:233px">NaN</div>
<div class="cell" style="left:476px;top:233px">0.0</div>
<div class="cell" style="left:551px;top:233px">0.0</div>
<div class="cell" style="left:626px;top:233px">0.0</div>
<div class="cell" style="left:701px;top:233px">0.0</div>
<div class="cell" style="left:776px;top:233px">0.0</div>
<div class="cell" style="left:851px;top:233px">0.0</div>
<div class="cell" style="left:918px;top:233px;width:60px;overflow:hidden"><span style="position:absolute;left:53.5px">0.0</span></div>
<div class="a" style="left:90px;top:248px;width:888px;height:16px;background:#ebebeb"></div>
<div class="a" style="left:0;top:263px;width:89px;height:1px;background:#acacac"></div>
<div class="t" style="left:0;top:249px;width:89px;text-align:center">15</div>
<div class="cell" style="left:102px;top:249px">NaN</div>
<div class="cell" style="left:177px;top:249px">NaN</div>
<div class="cell" style="left:252px;top:249px">NaN</div>
<div class="cell" style="left:327px;top:249px">NaN</div>
<div class="cell" style="left:402px;top:249px">NaN</div>
<div class="cell" style="left:476px;top:249px">0.0</div>
<div class="cell" style="left:551px;top:249px">0.0</div>
<div class="cell" style="left:626px;top:249px">0.0</div>
<div class="cell" style="left:701px;top:249px">0.0</div>
<div class="cell" style="left:776px;top:249px">0.0</div>
<div class="cell" style="left:851px;top:249px">0.0</div>
<div class="cell" style="left:918px;top:249px;width:60px;overflow:hidden"><span style="position:absolute;left:53.5px">0.0</span></div>
<div class="a" style="left:90px;top:264px;width:888px;height:16px;background:#fff"></div>
<div class="a" style="left:0;top:279px;width:89px;height:1px;background:#acacac"></div>
<div class="t" style="left:0;top:265px;width:89px;text-align:center">16</div>
<div class="cell" style="left:102px;top:265px">NaN</div>
<div class="cell" style="left:177px;top:265px">NaN</div>
<div class="cell" style="left:252px;top:265px">NaN</div>
<div class="cell" style="left:327px;top:265px">NaN</div>
<div class="cell" style="left:402px;top:265px">NaN</div>
<div class="cell" style="left:476px;top:265px">0.0</div>
<div class="cell" style="left:551px;top:265px">0.0</div>
<div class="cell" style="left:626px;top:265px">0.0</div>
<div class="cell" style="left:701px;top:265px">0.0</div>
<div class="cell" style="left:776px;top:265px">0.0</div>
<div class="cell" style="left:851px;top:265px">0.0</div>
<div class="cell" style="left:918px;top:265px;width:60px;overflow:hidden"><span style="position:absolute;left:53.5px">0.0</span></div>
<div class="a" style="left:978px;top:24px;width:17px;height:256px;background:#f0f0f0"></div>
<div class="a" style="left:979px;top:41px;width:15px;height:69px;background:#cdcdcd"></div>
<svg class="a" style="left:982px;top:29px" width="10" height="7" viewBox="0 0 10 7"><path d="M1.300 5.800L5 2L8.700 5.800" fill="none" stroke="#505050" stroke-width="1.700"/></svg>
<svg class="a" style="left:982px;top:266px" width="10" height="7" viewBox="0 0 10 7"><path d="M1.300 1.200L5 5L8.700 1.200" fill="none" stroke="#505050" stroke-width="1.700"/></svg>
<div class="a" style="left:90px;top:279px;width:905px;height:17px;background:#f0f0f0"></div>
<div class="a" style="left:0;top:278px;width:89px;height:1px;background:#acacac"></div><div class="a" style="left:0;top:279px;width:89px;height:17px;background:#f0f0f0"></div>
<div class="a" style="left:107px;top:279px;width:102px;height:15px;background:#cdcdcd"></div>
<svg class="a" style="left:94px;top:281.5px" width="7" height="10" viewBox="0 0 7 10"><path d="M5.500 1.500L2 5L5.500 8.500" fill="none" stroke="#505050" stroke-width="1.700"/></svg>
<svg class="a" style="left:967px;top:281.5px" width="7" height="10" viewBox="0 0 7 10"><path d="M1.500 1.500L5 5L1.500 8.500" fill="none" stroke="#505050" stroke-width="1.700"/></svg>
</div>
<div class="t" style="left:78.4px;top:484px;font-size:11px;letter-spacing:-0.132px">Data Format:</div>
<div class="a" style="left:145px;top:481px;width:52px;height:21px;border:1px solid #adadad;background:#e1e1e1"><span class="t" style="left:2px;top:2px;color:#000">%.1f</span><svg class="a" style="right:5px;top:8px" width="9" height="6" viewBox="0 0 9 6"><path d="M0.500 0.500L4.500 4.500L8.500 0.500" fill="none" stroke="#444" stroke-width="1"/></svg></div>
<div class="a" style="left:301px;top:485px;width:13px;height:13px;border:1px solid #333;background:#fff"></div>
<div class="t" style="left:317.2px;top:484px;font-size:11px;letter-spacing:-0.237px">Flip table B/T</div>
<div class="a" style="left:388px;top:485px;width:13px;height:13px;border:1px solid #333;background:#fff"></div>
<div class="t" style="left:404.5px;top:484px;font-size:11px;letter-spacing:-0.258px">Flip table L/R</div>
<div class="a" style="left:575px;top:485px;width:13px;height:13px;border:1px solid #333;background:#fff"><svg class="a" style="left:0;top:0" width="11" height="11" viewBox="0 0 11 11"><path d="M1.500 5.500L4.200 8.200L9.500 2.500" fill="none" stroke="#222" stroke-width="1.200"/></svg></div>
<div class="t" style="left:591.9px;top:484px;font-size:11px;letter-spacing:-0.351px">Show cell indices</div>
<div class="t" style="left:775.4px;top:484px;font-size:11px;letter-spacing:-0.13px">Row/Col Header Format:</div>
<div class="a" style="left:897px;top:481px;width:52px;height:21px;border:1px solid #c6c6c6;background:#e5e5e5"><span class="t" style="left:2px;top:2px;color:#858585">%.8G</span><svg class="a" style="right:5px;top:8px" width="9" height="6" viewBox="0 0 9 6"><path d="M0.500 0.500L4.500 4.500L8.500 0.500" fill="none" stroke="#a8a8a8" stroke-width="1"/></svg></div>
<div class="a" style="left:0;top:511px;width:1030px;height:1px;background:#a8a8a8"></div>
<div class="a" style="left:0;top:512px;width:1030px;height:25px;background:#f3f3f3"></div>
<svg class="a" style="left:0px;top:510px" width="1030" height="27" viewBox="0 0 1030 27"><defs><linearGradient id="tg3" x1="0" y1="0" x2="0" y2="1"><stop offset="0" stop-color="#e9e9e9"/><stop offset="1" stop-color="#d6d6d6"/></linearGradient></defs><rect x="0" y="24.5" width="1030" height="2.5" fill="#eeeeee"/><path d="M0 24.5H1030" stroke="#b4b4b4" fill="none"/><path d="M0 25.5H1030" stroke="#dcdcdc" fill="none"/><path d="M451.5 24.5 C458.5 24.5 457.5 3.5 464.5 3.5 L510.0 3.5 C517.0 3.5 516.0 24.5 523.0 24.5" fill="url(#tg3)" stroke="#a6a6a6"/><path d="M311.6 24.5 C318.6 24.5 317.6 3.5 324.6 3.5 L385.4 3.5 C392.4 3.5 391.4 24.5 398.4 24.5" fill="url(#tg3)" stroke="#a6a6a6"/><path d="M243.70000000000005 24.5 C250.70000000000005 24.5 249.70000000000005 3.5 256.70000000000005 3.5 L311.5 3.5 C318.5 3.5 317.5 24.5 324.5 24.5" fill="url(#tg3)" stroke="#a6a6a6"/><path d="M170.89999999999998 24.5 C177.89999999999998 24.5 176.89999999999998 3.5 183.89999999999998 3.5 L243.60000000000002 3.5 C250.60000000000002 3.5 249.60000000000002 24.5 256.6 24.5" fill="url(#tg3)" stroke="#a6a6a6"/><path d="M123.89999999999998 24.5 C130.89999999999998 24.5 129.89999999999998 3.5 136.89999999999998 3.5 L170.8 3.5 C177.8 3.5 176.8 24.5 183.8 24.5" fill="url(#tg3)" stroke="#a6a6a6"/><path d="M70.89999999999998 24.5 C77.89999999999998 24.5 76.89999999999998 3.5 83.89999999999998 3.5 L123.80000000000001 3.5 C130.8 3.5 129.8 24.5 136.8 24.5" fill="url(#tg3)" stroke="#a6a6a6"/><path d="M0.0 24.5 C7.0 24.5 6.0 3.5 13.0 3.5 L70.80000000000001 3.5 C77.80000000000001 3.5 76.80000000000001 24.5 83.80000000000001 24.5" fill="url(#tg3)" stroke="#a6a6a6"/><path d="M385.9 24.5 C392.9 24.5 391.9 3.5 398.9 3.5 L451.4 3.5 C458.4 3.5 457.4 24.5 464.4 24.5 V26.0 H385.9Z" fill="#eeeeee" stroke="none"/><path d="M385.9 24.5 C392.9 24.5 391.9 3.5 398.9 3.5 L451.4 3.5 C458.4 3.5 457.4 24.5 464.4 24.5" fill="none" stroke="#b0b0b0"/></svg>
<div class="tabt" style="left:17.5px;top:518px;font-size:11.5px;letter-spacing:0.461px">Array(s)</div>
<div class="tabt" style="left:88.39999999999998px;top:518px;font-size:11.5px;letter-spacing:-0.032px">Scale</div>
<div class="tabt" style="left:141.39999999999998px;top:518px;font-size:11.5px;letter-spacing:0.3px">Map</div>
<div class="tabt" style="left:188.39999999999998px;top:518px;font-size:11.5px;letter-spacing:0.136px">Overlays</div>
<div class="tabt" style="left:261.20000000000005px;top:518px;font-size:11.5px;letter-spacing:-0.082px">Shading</div>
<div class="tabt" style="left:329.1px;top:518px;font-size:11.5px;letter-spacing:-0.039px">Contours</div>
<div class="tabt" style="left:403.4px;top:518px;font-size:11.5px;letter-spacing:0.134px">Vectors</div>
<div class="tabt" style="left:469px;top:518px;font-size:11.5px;letter-spacing:-0.156px">Labels</div>
<div class="t" style="left:7.5px;top:550px;font-size:11px;letter-spacing:-0.02px">Vector Style:</div>
<div class="a" style="left:93px;top:547px;width:90px;height:20px;border:1px solid #c6c6c6;background:#e5e5e5"><span class="t" style="left:2px;top:2px;color:#858585">Arrow</span><svg class="a" style="right:5px;top:7px" width="9" height="6" viewBox="0 0 9 6"><path d="M0.500 0.500L4.500 4.500L8.500 0.500" fill="none" stroke="#a8a8a8" stroke-width="1"/></svg></div>
<div class="t" style="left:184px;top:550px;font-size:11px;letter-spacing:-0.302px">, Spacing:</div>
<div class="a" style="left:233px;top:547px;width:31px;height:20px;border:1px solid #b8b8b8;background:#fff"><span class="t" style="right:4px;top:2px;color:#777">110</span></div>
<div class="t" style="left:265.3px;top:550px;font-size:11px;letter-spacing:0.128px">%,</div>
<div class="t" style="left:7.5px;top:575px;font-size:11px;letter-spacing:-0.174px">Color:</div>
<div class="a" style="left:93px;top:571px;width:63px;height:21px;border:1px solid #c4c4c4;background:#cfcfcf"><div class="a" style="left:2px;top:5px;width:39px;height:9px;background:#000"></div><svg class="a" style="right:4px;top:7px" width="10" height="6" viewBox="0 0 10 6"><path d="M0.500 0.500L5 5L9.500 0.500" fill="none" stroke="#a0a0a0" stroke-width="1"/></svg></div>
<div class="t" style="left:157px;top:575px;font-size:11px;letter-spacing:-0.024px">, Weight:</div>
<div class="a" style="left:203px;top:572px;width:31px;height:20px;border:1px solid #b8b8b8;background:#fff"><span class="t" style="right:4px;top:2px;color:#777">75</span></div>
<div class="t" style="left:235px;top:575px;font-size:11px;letter-spacing:-0.381px">%</div>
<div class="t" style="left:7.5px;top:600px;font-size:11px;letter-spacing:-0.105px">Reference Value:</div>
<div class="a" style="left:93px;top:597px;width:70px;height:20px;border:1px solid #b0b0b0;background:#ececec"><span class="t" style="right:5px;top:2px;color:#8a8a8a">0.75</span></div>
<div class="t" style="left:7.5px;top:625px;font-size:11px;letter-spacing:-0.434px">Scale Sample:</div>
<div class="a" style="left:97px;top:626px;width:13px;height:13px;border:1px solid #c0c0c0;background:#f4f4f4"><svg class="a" style="left:0;top:0" width="11" height="11" viewBox="0 0 11 11"><path d="M1.500 5.500L4.200 8.200L9.500 2.500" fill="none" stroke="#a0a0a0" stroke-width="1.200"/></svg></div>
<div class="t" style="left:113.8px;top:625px;font-size:11px;letter-spacing:-0.546px;color:#8a8a8a">Visible</div>
<div class="t" style="left:514.8px;top:550px;font-size:11px;letter-spacing:-0.042px">Array 1 values are positive</div>
<div class="a" style="left:646px;top:547px;width:52px;height:20px;border:1px solid #c6c6c6;background:#e5e5e5"><span class="t" style="left:2px;top:2px;color:#858585">East</span><svg class="a" style="right:5px;top:7px" width="9" height="6" viewBox="0 0 9 6"><path d="M0.500 0.500L4.500 4.500L8.500 0.500" fill="none" stroke="#a8a8a8" stroke-width="1"/></svg></div>
<div class="t" style="left:514.8px;top:575px;font-size:11px;letter-spacing:-0.042px">Array 2 values are positive</div>
<div class="a" style="left:646px;top:572px;width:52px;height:20px;border:1px solid #c6c6c6;background:#e5e5e5"><span class="t" style="left:2px;top:2px;color:#858585">North</span><svg class="a" style="right:5px;top:7px" width="9" height="6" viewBox="0 0 9 6"><path d="M0.500 0.500L4.500 4.500L8.500 0.500" fill="none" stroke="#a8a8a8" stroke-width="1"/></svg></div>
<div class="a" style="left:0;top:677px;width:1030px;height:1px;background:#929292"></div>
<div class="a" style="left:0;top:678px;width:1030px;height:20px;background:#f0f0f0"></div>
</div>
<div class="t" style="left:1073.5px;top:650px;font-size:20px;letter-spacing:-0.103px;color:#b4b4b4;line-height:24px;height:24px">Activate Windows</div>
<div class="t" style="left:1073.5px;top:675px;font-size:15px;letter-spacing:-0.048px;color:#b4b4b4;line-height:18px;height:18px">Go to Settings to activate Windows.</div>
</body></html>
